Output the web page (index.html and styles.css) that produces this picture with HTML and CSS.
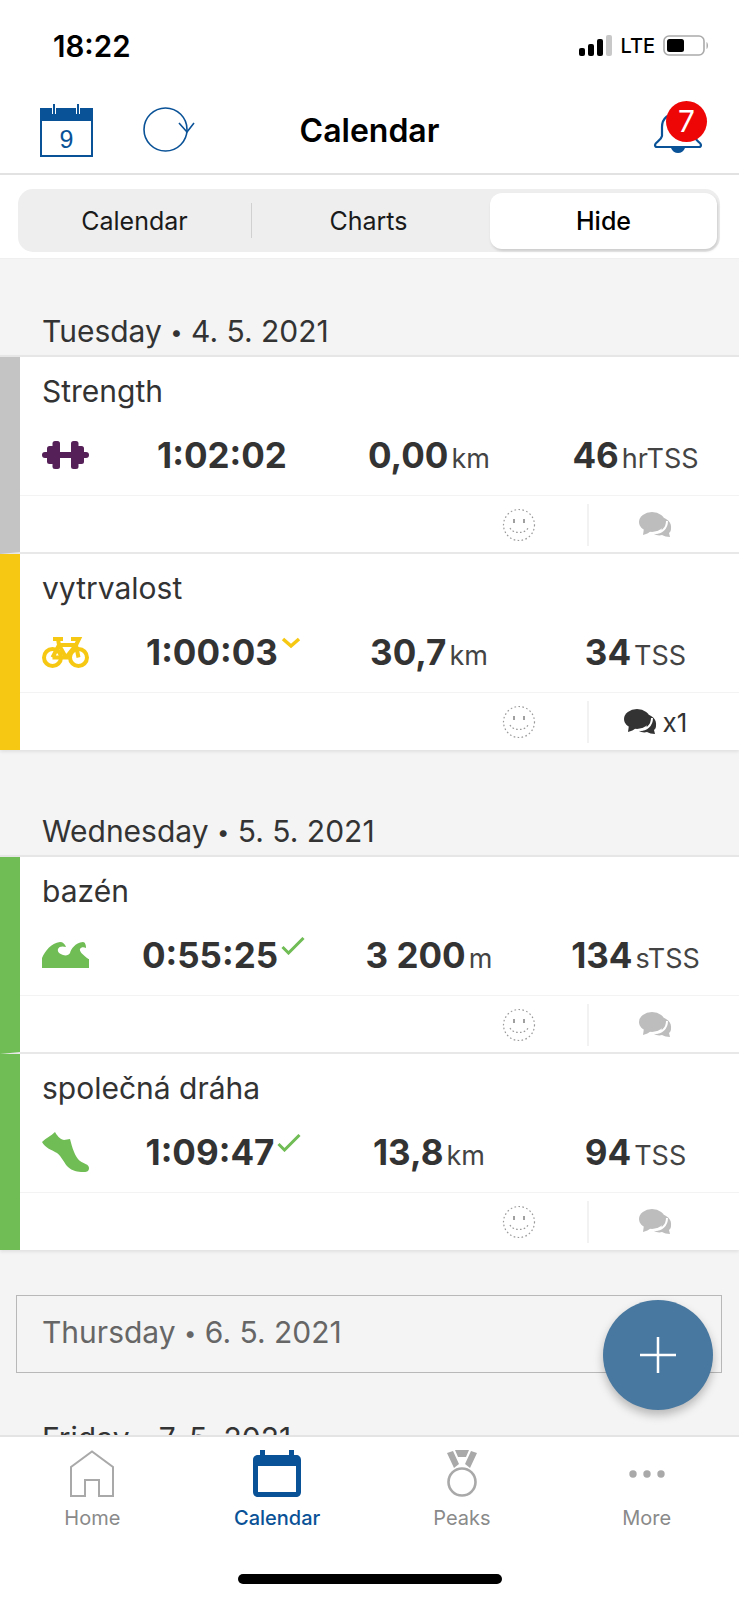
FILE: index.html
```html
<!DOCTYPE html>
<html lang="en">
<head>
<meta charset="utf-8">
<title>Calendar</title>
<link rel="stylesheet" href="styles.css">
</head>
<body>
<svg class="defs" width="0" height="0" aria-hidden="true">
  <symbol id="smile" viewBox="0 0 34 34">
    <circle cx="17" cy="17" r="15.5" fill="none" stroke="#9a9a9a" stroke-width="1.2" stroke-dasharray="1.6 2.4"/>
    <path d="M12 11v4M22 11v4" stroke="#a0a0a0" stroke-width="2" fill="none"/>
    <path d="M8 20c3 6 15 6 18 0" fill="none" stroke="#9a9a9a" stroke-width="1.2" stroke-dasharray="1.6 2.2"/>
  </symbol>
  <symbol id="chat" viewBox="0 0 34 26">
    <path d="M21 5c7 1 12 5 11 12 0 2-1 3-2 4l1 4c-3 0-6-1-8-2-3 1-6 0-8-1 5 0 9-3 8-9 0-3-1-6-2-8z"/>
    <ellipse cx="13" cy="10" rx="13" ry="10"/>
    <path d="M5 16l-1 7c3-1 6-2 8-4z"/>
    <path d="M16 21c6 0 12-4 12-12" fill="none" stroke="#fff" stroke-width="2"/>
  </symbol>
</svg>
<div class="screen">
  <div class="status">
    <span class="time">18:22</span>
    <div class="status-right">
      <svg class="signal" viewBox="0 0 33 21" width="33" height="21"><rect x="0" y="13" width="6" height="8" rx="2" fill="#000"/><rect x="9" y="9" width="6" height="12" rx="2" fill="#000"/><rect x="18" y="4" width="6" height="17" rx="2" fill="#000"/><rect x="27" y="0" width="6" height="21" rx="2" fill="#c8c8c8"/></svg>
      <span class="lte">LTE</span>
      <svg class="battery" viewBox="0 0 46 21" width="46" height="21"><rect x="1" y="1" width="40" height="19" rx="5" fill="none" stroke="#aaa" stroke-width="1.6"/><rect x="4" y="4" width="17" height="13" rx="2.5" fill="#000"/><path d="M43.5 7c2 1 2 6 0 7z" fill="#aaa"/></svg>
    </div>
  </div>
  <header class="topbar">
    <svg class="ic-cal" viewBox="0 0 53 53" width="53" height="53">
      <rect x="1" y="5" width="51" height="47" fill="#fff" stroke="#0a5297" stroke-width="2"/>
      <rect x="1" y="5" width="51" height="12" fill="#0a5297"/>
      <path d="M14 0v10M38 0v10" stroke="#fff" stroke-width="4"/>
      <path d="M14 0v10M38 0v10" stroke="#0a5297" stroke-width="2"/>
      <text x="26.5" y="44" class="ic-cal-num">9</text>
    </svg>
    <svg class="ic-sync" viewBox="0 0 52 46" width="52" height="46">
      <circle cx="22.500" cy="22.500" r="21.500" fill="none" stroke="#0a5297" stroke-width="1.600"/>
      <path d="M36 16l8 9 7-9" fill="none" stroke="#0a5297" stroke-width="1.600"/>
    </svg>
    <h1 class="title">Calendar</h1>
    <div class="bell">
      <svg viewBox="0 0 50 41" width="50" height="41">
        <path d="M2 33c0-3 6-4 7-9V15C9 6 16 1 25 1s16 5 16 14v9c1 5 7 6 7 9 0 1-1 2-2 2H4c-1 0-2-1-2-2z" fill="#fff" stroke="#0a5297" stroke-width="2.200"/>
        <path d="M18 36h14c-1 3-4 5-7 5s-6-2-7-5z" fill="#0a5297"/>
      </svg>
      <span class="badge">7</span>
    </div>
  </header>
  <div class="segment-wrap">
    <div class="segment">
      <span class="seg">Calendar</span>
      <span class="seg seg-mid">Charts</span>
      <span class="seg seg-on">Hide</span>
    </div>
  </div>
  <main class="scroll">
    <h2 class="day first">Tuesday <span class="dot">•</span> 4. 5. 2021</h2>
    <section class="card">
      <article class="workout grey">
        <h3 class="name">Strength</h3>
        <div class="metrics">
          <svg class="sport" viewBox="0 0 47 28" width="47" height="28"><g fill="#552058"><rect x="10.500" y="0" width="7.500" height="28" rx="2.500"/><rect x="29" y="0" width="7.500" height="28" rx="2.500"/><rect x="5" y="5" width="8" height="18" rx="2.500"/><rect x="34" y="5" width="8" height="18" rx="2.500"/><rect x="0" y="11" width="47" height="6" rx="3"/></g></svg>
          <div class="metric"><b>1:02:02</b></div>
          <div class="metric"><b>0,00</b><span>km</span></div>
          <div class="metric"><b>46</b><span>hrTSS</span></div>
        </div>
        <div class="foot">
          <svg class="smile" width="34" height="34"><use href="#smile"/></svg>
          <div class="comment"><svg class="chat off" width="34" height="26"><use href="#chat"/></svg></div>
        </div>
      </article>
      <article class="workout yellow">
        <h3 class="name">vytrvalost</h3>
        <div class="metrics">
          <svg class="sport" viewBox="0 0 47 31" width="47" height="31"><g fill="none" stroke="#f6c813" stroke-width="4"><circle cx="10.500" cy="20.500" r="8.500"/><circle cx="36.500" cy="20.500" r="8.500"/><path d="M10.500 20.500L17 8h17l2.500 12.500M17 8l7 12.500h-13.500M24 20.500L34 8M11 2h10M16 2l1 6M29 2h8l-3 6"/></g></svg>
          <div class="metric timed"><b>1:00:03</b><svg class="mark" viewBox="0 0 20 12" width="20" height="12"><path d="M2 2l8 7 8-7" fill="none" stroke="#f6c813" stroke-width="3.500"/></svg></div>
          <div class="metric"><b>30,7</b><span>km</span></div>
          <div class="metric"><b>34</b><span>TSS</span></div>
        </div>
        <div class="foot">
          <svg class="smile" width="34" height="34"><use href="#smile"/></svg>
          <div class="comment"><svg class="chat" width="34" height="26"><use href="#chat"/></svg><span class="count">x1</span></div>
        </div>
      </article>
    </section>
    <h2 class="day">Wednesday <span class="dot">•</span> 5. 5. 2021</h2>
    <section class="card">
      <article class="workout green">
        <h3 class="name">bazén</h3>
        <div class="metrics">
          <svg class="sport" viewBox="0 0 47 26" width="47" height="26"><path fill="#70bc55" d="M0 26V16C3 9 9 1 18 0c3 0 5 2 6 5-3-1-7-1-8 2-1 3 2 5 5 6 3 1 6 0 7-2 1-4 5-10 13-11 2 0 3 3 3 6-2-1-5-1-6 1-1 2 3 6 7 9 1 1 2 1 2 1v9z"/></svg>
          <div class="metric timed"><b>0:55:25</b><svg class="mark check" viewBox="0 0 24 18" width="24" height="18"><path d="M1.500 10l6 6L22.500 1" fill="none" stroke="#70bc55" stroke-width="3"/></svg></div>
          <div class="metric"><b>3 200</b><span>m</span></div>
          <div class="metric"><b>134</b><span>sTSS</span></div>
        </div>
        <div class="foot">
          <svg class="smile" width="34" height="34"><use href="#smile"/></svg>
          <div class="comment"><svg class="chat off" width="34" height="26"><use href="#chat"/></svg></div>
        </div>
      </article>
      <article class="workout green">
        <h3 class="name">společná dráha</h3>
        <div class="metrics">
          <svg class="sport" viewBox="0 0 47 40" width="47" height="40"><path fill="#70bc55" d="M0 10C4 6 9 4 13 0c2 3 4 7 9 8l6-1c2 8 5 18 10 22 4 3 9 3 9 7s-3 4-6 4c-5 0-11-1-15-5-4-4-6-10-11-14C10 18 3 16 0 10z"/></svg>
          <div class="metric timed"><b>1:09:47</b><svg class="mark check" viewBox="0 0 24 18" width="24" height="18"><path d="M1.500 10l6 6L22.500 1" fill="none" stroke="#70bc55" stroke-width="3"/></svg></div>
          <div class="metric"><b>13,8</b><span>km</span></div>
          <div class="metric"><b>94</b><span>TSS</span></div>
        </div>
        <div class="foot">
          <svg class="smile" width="34" height="34"><use href="#smile"/></svg>
          <div class="comment"><svg class="chat off" width="34" height="26"><use href="#chat"/></svg></div>
        </div>
      </article>
    </section>
    <div class="day-empty">Thursday <span class="dot">•</span> 6. 5. 2021</div>
    <h2 class="day friday">Friday <span class="dot">•</span> 7. 5. 2021</h2>
    <button class="fab" aria-label="Add">
      <svg viewBox="0 0 36 36" width="36" height="36"><path d="M18 0v36M0 18h36" stroke="#fff" stroke-width="2.500"/></svg>
    </button>
  </main>
  <nav class="tabs">
    <div class="tab">
      <svg viewBox="0 0 46 47" width="46" height="47"><path d="M2 46V17L23 1.500 44 17v29H30V30H16v16z" fill="none" stroke="#a9a9a9" stroke-width="2"/></svg>
      <span>Home</span>
    </div>
    <div class="tab active">
      <svg viewBox="0 0 48 47" width="48" height="47"><path fill="#0a5297" fill-rule="evenodd" d="M7 0h5v5h24V0h5v5h2c3 0 5 2 5 5v32c0 3-2 5-5 5H5c-3 0-5-2-5-5V10c0-3 2-5 5-5h2zM5 16v26h38V16z"/></svg>
      <span>Calendar</span>
    </div>
    <div class="tab">
      <svg viewBox="0 0 32 47" width="32" height="47"><path fill="#a9a9a9" d="M9 0h14l-3 7h-8zM1 3l6-2 6 13-5 4zM31 3l-6-2-6 13 5 4z"/><circle cx="16" cy="32" r="13.500" fill="none" stroke="#a9a9a9" stroke-width="2.600"/></svg>
      <span>Peaks</span>
    </div>
    <div class="tab">
      <svg viewBox="0 0 36 47" width="36" height="47"><g fill="#a9a9a9"><circle cx="4" cy="24" r="3.700"/><circle cx="18" cy="24" r="3.700"/><circle cx="32" cy="24" r="3.700"/></g></svg>
      <span>More</span>
    </div>
    <div class="home-bar"></div>
  </nav>
</div>
</body>
</html>
```
FILE: styles.css
```css
* { box-sizing: border-box; }
html, body { margin: 0; padding: 0; }
body { font-family: Inter, "Liberation Sans", sans-serif; background: #fff; color: #333; }
.defs { position: absolute; }
.screen { width: 739px; height: 1600px; display: flex; flex-direction: column; overflow: hidden; background: #f4f4f4; }

.status { height: 90px; background: #fff; display: flex; justify-content: space-between; padding: 35px 30px 0 53px; align-items: flex-start; }
.time { font-size: 29.5px; font-weight: 600; color: #000; line-height: 22px; }
.status-right { display: flex; align-items: center; height: 21px; margin-left: 1px; }
.lte { font-size: 20px; color: #000; margin: 2px 8px 0 8px; line-height: 21px; font-weight: 500; }

.topbar { height: 85px; background: #fff; border-bottom: 2px solid #e2e2e2; position: relative; display: flex; padding-left: 40px; }
.ic-cal { margin-top: 14px; }
.ic-cal-num { font-size: 25px; fill: #0a5297; text-anchor: middle; font-family: "Liberation Sans", sans-serif; }
.ic-sync { margin: 17px 0 0 50px; }
.title { position: absolute; left: 0; right: 0; top: 21px; margin: 0; text-align: center; font-size: 32px; font-weight: 600; color: #000; line-height: 40px; }
.bell { position: absolute; left: 653px; top: 22px; width: 50px; height: 41px; }
.badge { position: absolute; left: 13px; top: -11px; width: 41px; height: 41px; border-radius: 50%; background: #ee0606; color: #fff; font-size: 30px; line-height: 41px; text-align: center; }

.segment-wrap { height: 83px; background: #fff; padding: 14px 19px 0 18px; box-shadow: 0 1px 1px #efefef; position: relative; }
.segment { height: 63px; background: #eeeeee; border-radius: 15px; display: grid; grid-template-columns: 233px 239px 227px; padding: 4px 3px 4px 0; align-items: center; }
.seg { font-size: 25px; color: #1a1a1a; text-align: center; line-height: 55px; font-weight: 400; padding-top: 1px; }
.seg-mid { position: relative; padding-right: 4px; }
.seg-mid::before { content: ""; position: absolute; left: 0; top: 10px; height: 35px; width: 1px; background: #d0d0d0; }
.seg-on { background: #fff; border-radius: 12px; font-weight: 500; color: #000; box-shadow: 1px 2px 3px rgba(0,0,0,.15); }

.scroll { flex: 1; position: relative; overflow: hidden; }
.day { margin: 55px 0 0; height: 50px; padding: 1px 0 0 42px; font-size: 30px; font-weight: 400; line-height: 50px; color: #333; }
.day.first { margin-top: 47px; }
.day.friday { margin-top: 39px; }
.dot { font-size: 22px; vertical-align: 2px; }
.card { background: #fff; border-top: 2px solid #e6e6e6; box-shadow: 0 2px 3px rgba(0,0,0,.08); }
.workout { border-left: 20px solid #ccc; height: 197px; border-bottom: 2px solid #e8e8e8; display: flex; flex-direction: column; }
.workout:last-child { border-bottom: 0; height: 196px; }
.grey { border-left-color: #c4c4c4; }
.yellow { border-left-color: #f6c813; }
.green { border-left-color: #70bc55; }
.name { margin: 0; padding: 12px 0 0 22px; font-size: 30px; font-weight: 400; line-height: 44px; height: 57px; color: #333; }
.metrics { height: 81px; display: grid; grid-template-columns: 98.5px 207px 207px 206px; align-items: center; padding-top: 1px; }
.sport { margin-left: 22px; }
.metric { display: flex; justify-content: center; align-items: baseline; position: relative; white-space: nowrap; }
.metric.timed { padding-left: 3px; }
.metric b { font-size: 35px; font-weight: 700; color: #333; }
.metric span { font-size: 27px; font-weight: 400; color: #444; margin-left: 3px; }
.mark { align-self: flex-start; margin: 6px 0 0 3px; }
.mark.check { margin-top: 3px; }
.foot { flex: 1; border-top: 1px solid #f3f3f3; padding-top: 1px; display: flex; align-items: center; justify-content: flex-end; position: relative; }
.smile { margin-right: 51px; }
.comment { width: 152px; height: 42px; border-left: 2px solid #f2f2f2; display: flex; align-items: center; justify-content: center; padding-right: 17px; gap: 5px; }
.chat { fill: #333; }
.chat.off { fill: #bdbdbd; }
.count { font-size: 26px; color: #333; }
.day-empty { margin: 45px 17px 0 16px; height: 78px; border: 1px solid #b8b8b8; padding-left: 25px; font-size: 30px; line-height: 72px; color: #666; }
.fab { position: absolute; left: 603px; top: 1042px; width: 110px; height: 110px; border: 0; border-radius: 50%; background: #48789f; box-shadow: 0 5px 10px rgba(0,0,0,.25); display: flex; align-items: center; justify-content: center; padding: 0; }

.tabs { height: 165px; background: #fff; border-top: 2px solid #e4e4e4; display: grid; grid-template-columns: repeat(4, 1fr); position: relative; align-content: start; padding-top: 13px; }
.tab { display: flex; flex-direction: column; align-items: center; color: #8a8a8a; font-size: 20px; font-weight: 400; }
.tab span { margin-top: 9px; line-height: 24px; }
.tab.active { color: #0a5297; font-weight: 500; }
.home-bar { position: absolute; left: 238px; top: 137px; width: 264px; height: 10px; border-radius: 5px; background: #000; }
```
